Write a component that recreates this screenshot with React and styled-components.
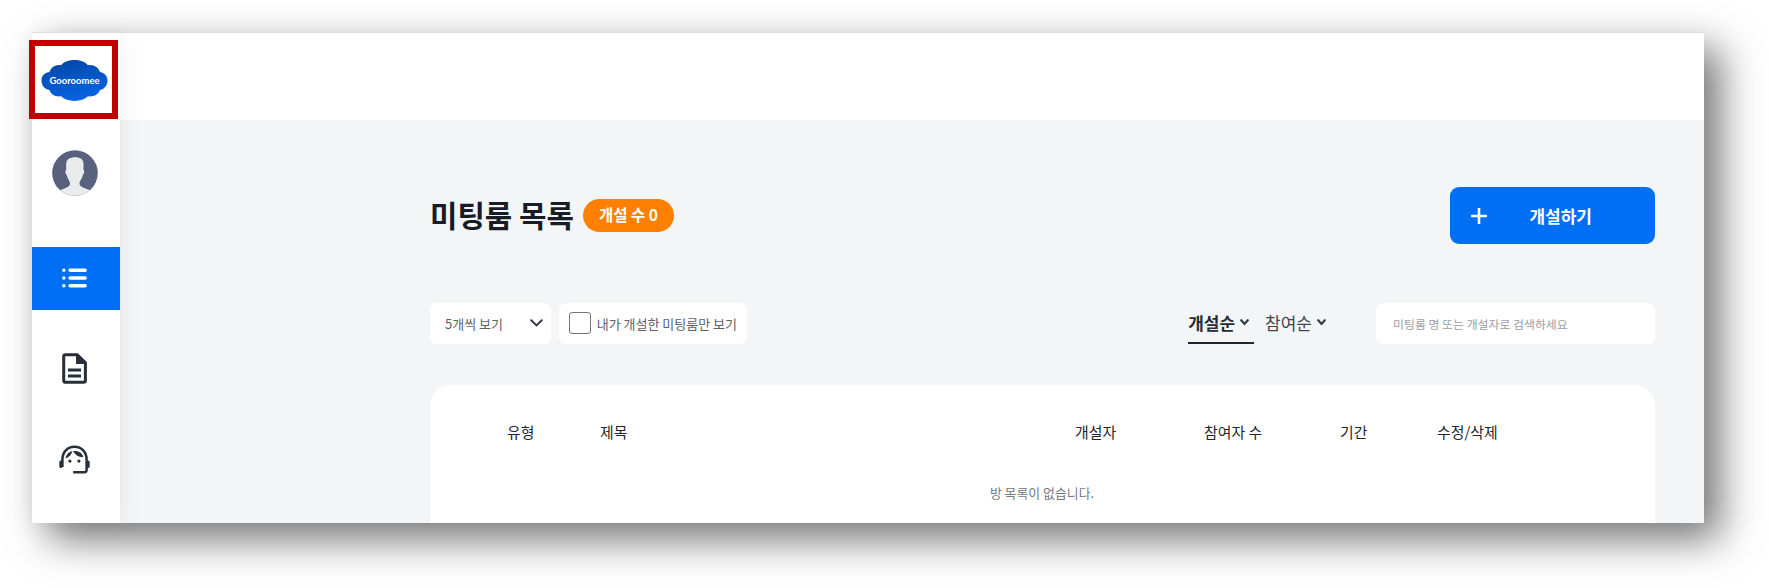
import React from "react";
import styled, { createGlobalStyle } from "styled-components";

const Global = createGlobalStyle`
  * { box-sizing: border-box; }
  body {
    margin: 0;
    background: #fff;
    font-family: "Noto Sans CJK KR", "Noto Sans", sans-serif;
    color: #212529;
    overflow: hidden;
  }
  h1, p { margin: 0; }
  button, input { font: inherit; border: 0; }
  svg { display: block; flex: none; }
`;

const Stage = styled.div`
  height: 588px;
  padding: 32px 65px 65px 32px;
`;

const Window = styled.div`
  display: flex;
  height: 491px;
  background: #f3f5f6;
  box-shadow: 16px 16px 38px rgba(0, 0, 0, 0.55);
`;

const Sidebar = styled.nav`
  position: relative;
  z-index: 1;
  width: 88px;
  flex: none;
  display: flex;
  flex-direction: column;
  align-items: center;
  background: #fff;
  border-top: 1px solid #dedede;
  box-shadow: 2px 0 20px rgba(60, 80, 80, 0.08);
`;

const LogoFrame = styled.a`
  width: 89px;
  height: 79px;
  margin: 7px 0 0 -5px;
  padding: 2px 0 0 2px;
  border: 6px solid #c00000;
  display: flex;
  align-items: center;
  justify-content: center;
`;

const Avatar = styled.div`
  margin: 31px 0 51px;
  padding-right: 2px;
  height: 46px;
`;

const NavItem = styled.a`
  width: 100%;
  height: ${(p) => p.$height}px;
  display: flex;
  align-items: center;
  justify-content: center;
  padding: 0 3px ${(p) => (p.$active ? 2 : 0)}px 0;
  background: ${(p) => (p.$active ? "#006ff5" : "transparent")};
  color: ${(p) => (p.$active ? "#fff" : "#262f3a")};
`;

const Main = styled.div`
  flex: 1;
  display: flex;
  flex-direction: column;
  overflow: hidden;
`;

const TopBar = styled.header`
  height: 88px;
  flex: none;
  background: #fff;
  border-top: 1px solid #dedede;
`;

const Content = styled.main`
  flex: 1;
  padding: 67px 49px 0 310px;
`;

const Row = styled.div`
  display: flex;
  align-items: center;
  justify-content: space-between;
`;

const Group = styled.div`
  display: flex;
  align-items: center;
  gap: ${(p) => p.$gap}px;
`;

const Title = styled.h1`
  width: 144px;
  padding-bottom: 4px;
  font-size: 29.8px;
  line-height: 40px;
  font-weight: 700;
  color: #171c26;
  white-space: nowrap;
`;

const Badge = styled.span`
  width: 91px;
  height: 33px;
  border-radius: 17px;
  background: #ff8000;
  color: #fff;
  font-size: 15.5px;
  font-weight: 700;
  line-height: 31px;
  text-align: center;
`;

const CreateButton = styled.button`
  width: 205px;
  height: 57px;
  padding: 0 63px 0 20px;
  border-radius: 9px;
  background: #006ff5;
  color: #fff;
  font-size: 17px;
  font-weight: 700;
  display: flex;
  align-items: center;
  justify-content: space-between;
`;

const Toolbar = styled(Row)`
  margin-top: 59px;
`;

const Field = styled.div`
  width: ${(p) => p.$width}px;
  height: 41px;
  border-radius: 7px;
  background: #fff;
  color: #5c6167;
  font-size: 13px;
  display: flex;
  align-items: center;
  justify-content: space-between;
  padding: ${(p) => p.$padding};
  white-space: nowrap;
`;

const Checkbox = styled.span`
  width: 22px;
  height: 22px;
  border: 1.5px solid #767676;
  border-radius: 3px;
  background: #fff;
`;

const Sort = styled.a`
  height: 41px;
  display: flex;
  align-items: center;
  gap: 5px;
  padding-right: ${(p) => (p.$active ? 5 : 0)}px;
  font-size: 17px;
  font-weight: ${(p) => (p.$active ? 700 : 400)};
  color: ${(p) => (p.$active ? "#262b35" : "#41464d")};
  border-bottom: 2px solid ${(p) => (p.$active ? "#20242f" : "transparent")};
`;

const Search = styled.input`
  width: 279px;
  height: 41px;
  margin-left: 39px;
  padding: 0 17px 1px;
  border-radius: 7px;
  background: #fff;
  font-size: 11.9px;
  &::placeholder { color: #9a9da3; opacity: 1; }
`;

const Card = styled.section`
  height: 180px;
  margin-top: 40.5px;
  border-radius: 20px;
  background: #fff;
`;

const HeadRow = styled.div`
  display: grid;
  grid-template-columns: 93px 475px 129px 136px 97px 1fr;
  padding: 36px 0 0 77px;
  font-size: 14.9px;
  line-height: 22px;
  color: #22262c;
`;

const Empty = styled.p`
  margin-top: 40px;
  padding-right: 1px;
  text-align: center;
  font-size: 12.9px;
  line-height: 20px;
  color: #75797e;
`;

const Chevron = ({ w, h, stroke, color = "#343a46" }) => (
  <svg width={w} height={h} viewBox={`0 0 ${w} ${h}`} fill="none">
    <path d={`M1.2 1.2L${w / 2} ${h - 1.6}L${w - 1.2} 1.2`} stroke={color} strokeWidth={stroke} strokeLinecap="round" />
  </svg>
);

const Logo = () => (
  <svg width="67" height="41" viewBox="0 0 67 41">
    <defs>
      <linearGradient id="cloud" x1="0.3" y1="0" x2="0.65" y2="1">
        <stop offset="0" stopColor="#0447a8" />
        <stop offset="1" stopColor="#0366e6" />
      </linearGradient>
    </defs>
    <path
      fill="url(#cloud)"
      d="M20 5.2C26-1.6 41-1.6 47 5.2C53 4.4 57.500 7.500 59 12C64 13 66.500 16.500 66.500 20.500S64 29 59 30C57 34.500 53 37 47 36.300C41 42.500 26 42.500 20 36.300C14 37 10 34.500 8.500 30C3 29 .5 25 .5 20.500S3 13 8.500 12C10 7.500 14 4.400 20 5.200Z"
    />
    <text x="33.500" y="23.500" fill="#fff" textAnchor="middle" textLength="50" lengthAdjust="spacingAndGlyphs" fontFamily="Lato, sans-serif" fontWeight="700" fontSize="8.8">
      Gooroomee
    </text>
  </svg>
);

const Person = () => (
  <svg width="46" height="46" viewBox="0 0 46 46">
    <defs>
      <clipPath id="face"><circle cx="23" cy="23" r="22.800" /></clipPath>
    </defs>
    <g clipPath="url(#face)">
      <rect width="46" height="46" fill="#59617f" />
      <path
        fill="#e9eced"
        d="M23 7.300C28.500 7.300 31.500 9.500 31.500 14V20C32.800 20.300 32 24.500 30.800 25C30 29 27.500 31 27.500 33.500C27.500 37 32 37.500 38.500 40.500V46H7.500V40.500C14 37.500 18 37 18 33.500C18 31 15.500 29 14.800 25C13.500 24.500 12.800 20.300 14.200 20V14C14.200 9.500 17.500 7.300 23 7.300Z"
      />
    </g>
  </svg>
);

const ListIcon = () => (
  <svg width="25" height="20" viewBox="0 0 25 20" fill="none" stroke="#fff" strokeWidth="3.400" strokeLinecap="round">
    <path d="M8 2.300H23.200M8 10H23.200M8 17.700H23.200M1.800 2.300h.01M1.800 10h.01M1.800 17.700h.01" />
  </svg>
);

const DocIcon = () => (
  <svg width="25" height="31" viewBox="0 0 25 31" fill="none" stroke="currentColor" strokeWidth="3">
    <path d="M3.400 1.700H15.200L23.400 9.700V27.600Q23.400 29.300 21.700 29.300H3.400Q1.700 29.300 1.700 27.600V3.400Q1.700 1.700 3.400 1.700Z" />
    <path d="M14 1V11H24L15.500 1.500Z" fill="currentColor" stroke="none" />
    <path d="M6 16.900H19M6 22.900H19" />
  </svg>
);

const AgentIcon = () => (
  <svg width="31" height="29" viewBox="0 0 31 29" fill="none" stroke="currentColor">
    <path d="M3.400 22V14.500C3.400 7 8.500 1.700 15.500 1.700S27.600 7 27.600 14.500V25Q27.600 27.200 25.400 27.200H14.200" strokeWidth="2.500" />
    <path d="M1.800 17V21.500M29.200 17V21.500" strokeWidth="3" strokeLinecap="round" />
    <path d="M6.500 13.500C7 9.500 9.800 6.800 13.500 6.200C12.500 9.500 10 12.300 6.500 13.500Z" fill="currentColor" stroke="none" />
    <path d="M14 6.100C19.500 5.300 23.500 8 24.300 12.300C19.800 12.500 16 10 14 6.100Z" fill="currentColor" stroke="none" />
    <circle cx="10.900" cy="16.100" r="1.600" fill="currentColor" stroke="none" />
    <circle cx="19.900" cy="16.100" r="1.600" fill="currentColor" stroke="none" />
  </svg>
);

export default function App() {
  return (
    <>
      <Global />
      <Stage>
        <Window>
          <Sidebar>
            <LogoFrame><Logo /></LogoFrame>
            <Avatar><Person /></Avatar>
            <NavItem $active $height={63}><ListIcon /></NavItem>
            <NavItem $height={117}><DocIcon /></NavItem>
            <NavItem $height={64}><AgentIcon /></NavItem>
          </Sidebar>
          <Main>
            <TopBar />
            <Content>
              <Row>
                <Group $gap={9}>
                  <Title>미팅룸 목록</Title>
                  <Badge>개설 수 0</Badge>
                </Group>
                <CreateButton>
                  <svg width="18" height="18" viewBox="0 0 18 18" stroke="#fff" strokeWidth="2.600">
                    <path d="M9 1V17M1 9H17" />
                  </svg>
                  개설하기
                </CreateButton>
              </Row>
              <Toolbar>
                <Group $gap={8}>
                  <Field $width={121} $padding="0 8px 1px 15px">
                    5개씩 보기
                    <Chevron w={13} h={8} stroke={2} />
                  </Field>
                  <Field $width={188} $padding="0 10px 1px 10px">
                    <Checkbox />
                    내가 개설한 미팅룸만 보기
                  </Field>
                </Group>
                <Group $gap={11}>
                  <Sort $active>개설순<Chevron w={9} h={6.5} stroke={2.2} /></Sort>
                  <Sort>참여순<Chevron w={9} h={6.5} stroke={2.2} /></Sort>
                  <Search placeholder="미팅룸 명 또는 개설자로 검색하세요" />
                </Group>
              </Toolbar>
              <Card>
                <HeadRow>
                  <span>유형</span>
                  <span>제목</span>
                  <span>개설자</span>
                  <span>참여자 수</span>
                  <span>기간</span>
                  <span>수정/삭제</span>
                </HeadRow>
                <Empty>방 목록이 없습니다.</Empty>
              </Card>
            </Content>
          </Main>
        </Window>
      </Stage>
    </>
  );
}
